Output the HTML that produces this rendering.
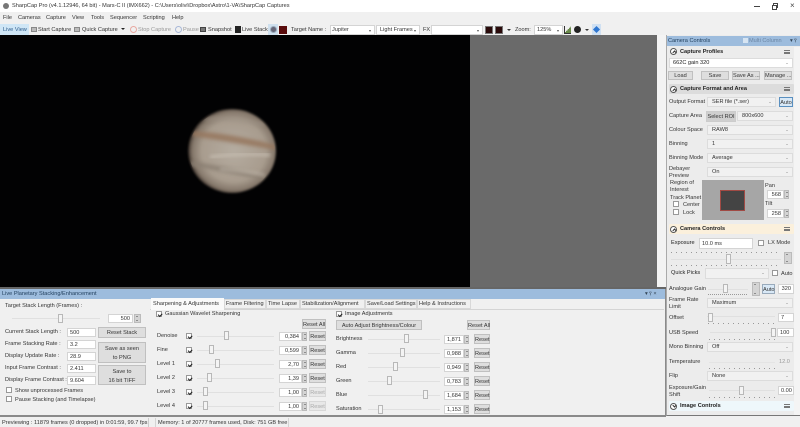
<!DOCTYPE html>
<html><head><meta charset="utf-8"><title>SharpCap Pro</title>
<style>
html,body{margin:0;padding:0}
body{width:800px;height:427px;overflow:hidden;position:relative;background:#f0f0f0;font:5.6px/8px "Liberation Sans",sans-serif;color:#333}
#r{position:absolute;left:0;top:0;width:800px;height:427px;overflow:hidden;filter:blur(.35px)}
#r div,#r span.s{position:absolute;box-sizing:border-box}
.t{white-space:nowrap;height:8px}
.g{color:#999}
.b{font-weight:bold;color:#222}
.i{background:#fff;border:.6px solid #d4d4d4;padding-right:2px;text-align:right;line-height:8px;white-space:nowrap}
.il{text-align:left;padding-left:2px}
.d{background:#f1f1f1;border:.6px solid #dcdcdc;padding-left:4px;line-height:9px;white-space:nowrap}
.d:after{content:"";position:absolute;right:4px;top:4px;border:1.4px solid transparent;border-top:1.8px solid #999;border-bottom:0}
.w{background:#fff;border:.6px solid #d4d4d4;padding-left:1px;line-height:9px;white-space:nowrap}
.w:after{content:"";position:absolute;right:3px;top:4px;border:1.6px solid transparent;border-top:2px solid #555;border-bottom:0}
.btn{background:#dedede;border:.6px solid #c0c0c0;text-align:center;white-space:nowrap;line-height:8px;color:#333}
.off{color:#aaa;background:#e8e8e8;border-color:#d8d8d8}
.c{background:#fff;border:.6px solid #999;width:6px;height:6px}
.ck:after{content:"";position:absolute;left:1px;top:.6px;width:3.4px;height:1.8px;border-left:.9px solid #222;border-bottom:.9px solid #222;transform:rotate(-45deg)}
.sl{height:1.2px;background:#e0e0e0}
.th{background:#f4f4f4;border:.6px solid #b8b8b8;width:5px;height:9px}
.sp{background:#d4d4d4;border:.6px solid #bbb;width:5px;height:9px}
.sp:before{content:"";position:absolute;left:.6px;top:1px;border:1.3px solid transparent;border-bottom:1.8px solid #444;border-top:0}
.sp:after{content:"";position:absolute;left:.6px;bottom:1px;border:1.3px solid transparent;border-top:1.8px solid #444;border-bottom:0}
.tk{height:1px;background:repeating-linear-gradient(90deg,#999 0 1px,transparent 1px 5px)}
.h{height:10px;border-radius:1px}
.o{width:7px;height:7px;border:.6px solid #555;border-radius:50%;background:#fff}
.o:after{content:"";position:absolute;left:1.7px;top:2.2px;width:2px;height:2px;border-left:.7px solid #333;border-top:.7px solid #333;transform:rotate(45deg)}
.dn:after{top:.9px;transform:rotate(225deg)}
.m{width:6px;height:4px;border-top:.7px solid #777;border-bottom:.7px solid #777}
.m:after{content:"";position:absolute;left:0;right:0;top:1px;height:.7px;background:#777}
</style></head><body><div id="r">

<!-- title -->
<div style="left:0;top:0;width:800px;height:12px;background:#fff"></div>
<div style="left:3px;top:3px;width:6px;height:6px;border-radius:50%;background:#777"></div>
<div class="t" style="left:12px;top:2px">SharpCap Pro (v4.1.12946, 64 bit) - Mars-C II (IMX662) - C:\Users\olivi\Dropbox\Astro\1-VA\SharpCap Captures</div>
<div style="left:754px;top:5.5px;width:6px;height:.7px;background:#444"></div>
<div style="left:773px;top:3px;width:5px;height:5px;border:.6px solid #444;background:#fff"></div>
<div style="left:771.5px;top:4.5px;width:5px;height:5px;border:.6px solid #444;background:#fff"></div>
<div class="t" style="left:790px;top:2px;font-size:8px;color:#444">×</div>

<!-- menu -->
<div class="t" style="left:3px;top:14px">File</div>
<div class="t" style="left:18px;top:14px">Cameras</div>
<div class="t" style="left:46px;top:14px">Capture</div>
<div class="t" style="left:72px;top:14px">View</div>
<div class="t" style="left:91px;top:14px">Tools</div>
<div class="t" style="left:110px;top:14px">Sequencer</div>
<div class="t" style="left:143px;top:14px">Scripting</div>
<div class="t" style="left:172px;top:14px">Help</div>

<!-- toolbar -->
<div style="left:0;top:24px;width:29px;height:11px;background:#cfe6f6"></div>
<div class="t" style="left:3px;top:26px;color:#2a5a8a">Live View</div>
<div style="left:31px;top:27px;width:6px;height:5px;background:#bbb;border:.6px solid #888"></div>
<div class="t" style="left:38px;top:26px">Start Capture</div>
<div style="left:74px;top:27px;width:6px;height:5px;background:#bbb;border:.6px solid #888"></div>
<div class="t" style="left:82px;top:26px">Quick Capture</div>
<div style="left:121px;top:28px;border:2px solid transparent;border-top:2.5px solid #222;border-bottom:0"></div>
<div style="left:130px;top:26px;width:7px;height:7px;border:.8px solid #e8a8a0;border-radius:50%"></div>
<div class="t g" style="left:138px;top:26px">Stop Capture</div>
<div style="left:175px;top:26px;width:7px;height:7px;border:.8px solid #a8b8d8;border-radius:50%"></div>
<div class="t g" style="left:183px;top:26px">Pause</div>
<div style="left:200px;top:27px;width:6px;height:5px;background:#777;border:.6px solid #444"></div>
<div class="t" style="left:208px;top:26px">Snapshot</div>
<div style="left:235px;top:26px;width:6px;height:7px;background:#222"></div>
<div class="t" style="left:242px;top:26px">Live Stack</div>
<div style="left:268px;top:24px;width:10px;height:11px;background:#cfe0ee"></div>
<div style="left:270px;top:26px;width:7px;height:7px;border-radius:50%;background:#667;border:1px solid #9ab"></div>
<div style="left:279px;top:26px;width:8px;height:8px;background:#5a0c0c"></div>
<div class="t" style="left:291px;top:26px">Target Name :</div>
<div class="w" style="left:330px;top:25px;width:45px;height:10px">Jupiter</div>
<div class="w" style="left:376px;top:25px;width:44px;height:10px;padding-left:3px">Light Frames</div>
<div class="t" style="left:423px;top:26px">FX</div>
<div class="w" style="left:431px;top:25px;width:52px;height:10px"></div>
<div style="left:485px;top:26px;width:8px;height:8px;background:#2a0a0a;border:.6px solid #777"></div>
<div style="left:495px;top:26px;width:8px;height:8px;background:#2a0a0a;border:.6px solid #777"></div>
<div style="left:507px;top:29px;border:2px solid transparent;border-top:2.5px solid #333;border-bottom:0"></div>
<div class="t" style="left:515px;top:26px">Zoom:</div>
<div class="w" style="left:534px;top:25px;width:29px;height:10px;padding-left:2px">125%</div>
<div style="left:564px;top:26px;width:7px;height:8px;background:linear-gradient(135deg,#f0f0f0 50%,#6a8a4a 50%);border-left:.8px solid #333;border-bottom:.8px solid #333"></div>
<div style="left:574px;top:26px;width:7px;height:7px;border-radius:50%;background:#222"></div>
<div style="left:585px;top:29px;border:2px solid transparent;border-top:2.5px solid #333;border-bottom:0"></div>
<div style="left:592px;top:24px;width:9px;height:11px;background:#cfe0f2"></div>
<div style="left:594px;top:27px;width:5px;height:5px;background:#2f76d0;transform:rotate(45deg)"></div>

<!-- image area -->
<div style="left:0;top:35px;width:470px;height:252px;background:#020203"></div>
<div style="left:470px;top:35px;width:187px;height:252px;background:#6a6a6a"></div>
<div style="left:657px;top:35px;width:9px;height:254px;background:#f3f3f3"></div>
<svg style="position:absolute;left:170px;top:95px" width="110" height="110" viewBox="0 0 110 110">
<defs>
<radialGradient id="p" cx=".52" cy=".5" r=".52"><stop offset="0" stop-color="#b5aca0"/><stop offset=".7" stop-color="#a89c8e"/><stop offset=".9" stop-color="#85786b"/><stop offset=".98" stop-color="#4a3f37"/><stop offset="1" stop-color="#1c1714"/></radialGradient>
<clipPath id="cp"><ellipse cx="62" cy="56" rx="43" ry="41"/></clipPath>
<filter id="f1" x="-20%" y="-50%" width="140%" height="200%"><feGaussianBlur stdDeviation="1.8"/></filter>
<filter id="f2"><feGaussianBlur stdDeviation="1"/></filter>
</defs>
<ellipse cx="62" cy="56" rx="44" ry="42" fill="url(#p)" filter="url(#f2)"/>
<g clip-path="url(#cp)">
<path d="M22 36 Q60 38 106 50 L106 55 Q60 47 22 41Z" fill="#96775f" opacity=".85" filter="url(#f1)"/>
<path d="M20 66 Q60 72 104 84 L104 87 Q60 78 20 71Z" fill="#8a7f72" opacity=".8" filter="url(#f1)"/>
<path d="M40 62 Q70 58 100 60" stroke="#c8bfb3" stroke-width="3" fill="none" opacity=".8" filter="url(#f1)"/>
<path d="M50 74 Q75 76 95 80" stroke="#c2b9ad" stroke-width="2.5" fill="none" opacity=".7" filter="url(#f1)"/>
<path d="M32 24 Q60 22 94 30" stroke="#9b9084" stroke-width="3" fill="none" opacity=".6" filter="url(#f1)"/>
</g>
</svg>
<div style="left:0;top:287px;width:666px;height:2px;background:#666"></div>

<!-- bottom panel -->
<div style="left:0;top:289px;width:666px;height:128px;background:#f0f0f0;border:.8px solid #8a8a8a;border-width:0 1px 2px 0"></div>
<div style="left:0;top:289px;width:665px;height:10px;background:#9dbcdd"></div>
<div class="t" style="left:2px;top:290px;color:#23415f">Live Planetary Stacking/Enhancement</div>
<div class="t" style="left:645px;top:290px;color:#345">▾ ⫯ ×</div>

<div class="t" style="left:5px;top:302px">Target Stack Length (Frames) :</div>
<div class="sl" style="left:12px;top:318px;width:88px"></div>
<div class="th" style="left:58px;top:314px"></div>
<div class="i" style="left:108px;top:314px;width:25px;height:9px">500</div>
<div class="sp" style="left:134px;top:314px;width:7px"></div>

<div class="t" style="left:5px;top:328px">Current Stack Length :</div>
<div class="i il" style="left:67px;top:328px;width:29px;height:9px">500</div>
<div class="t" style="left:5px;top:340px">Frame Stacking Rate :</div>
<div class="i il" style="left:67px;top:340px;width:29px;height:9px">3.2</div>
<div class="t" style="left:5px;top:352px">Display Update Rate :</div>
<div class="i il" style="left:67px;top:352px;width:29px;height:9px">28.9</div>
<div class="t" style="left:5px;top:364px">Input Frame Contrast :</div>
<div class="i il" style="left:67px;top:364px;width:29px;height:9px">2.411</div>
<div class="t" style="left:5px;top:376px">Display Frame Contrast :</div>
<div class="i il" style="left:67px;top:376px;width:29px;height:9px">9.604</div>
<div class="btn" style="left:98px;top:327px;width:48px;height:11px;line-height:11px">Reset Stack</div>
<div class="btn" style="left:98px;top:342px;width:48px;height:21px;line-height:9px;padding-top:1.5px">Save as seen<br>to PNG</div>
<div class="btn" style="left:98px;top:365px;width:48px;height:20px;line-height:9px;padding-top:1.5px">Save to<br>16 bit TIFF</div>
<div class="c" style="left:6px;top:387px"></div>
<div class="t" style="left:15px;top:387px">Show unprocessed Frames</div>
<div class="c" style="left:6px;top:396px"></div>
<div class="t" style="left:15px;top:396px">Pause Stacking (and Timelapse)</div>

<!-- tabs -->
<div style="left:150px;top:309px;width:514px;height:.6px;background:#d4d4d4"></div>
<div style="left:151px;top:298px;width:73px;height:12px;background:#fafafa"></div>
<div class="t" style="left:153px;top:300px">Sharpening &amp; Adjustments</div>
<div style="left:224px;top:299px;width:42px;height:10px;border:.6px solid #d8d8d8"></div><div class="t" style="left:226px;top:300px">Frame Filtering</div>
<div style="left:266px;top:299px;width:34px;height:10px;border:.6px solid #d8d8d8"></div><div class="t" style="left:268px;top:300px">Time Lapse</div>
<div style="left:300px;top:299px;width:65px;height:10px;border:.6px solid #d8d8d8"></div><div class="t" style="left:302px;top:300px">Stabilization/Alignment</div>
<div style="left:365px;top:299px;width:52px;height:10px;border:.6px solid #d8d8d8"></div><div class="t" style="left:367px;top:300px">Save/Load Settings</div>
<div style="left:417px;top:299px;width:54px;height:10px;border:.6px solid #d8d8d8"></div><div class="t" style="left:419px;top:300px">Help &amp; Instructions</div>

<!-- sharpening column -->
<div class="c ck" style="left:156px;top:311px"></div>
<div class="t" style="left:165px;top:310px">Gaussian Wavelet Sharpening</div>
<div class="btn" style="left:302px;top:319px;width:24px;height:10px;line-height:10px">Reset All</div>

<div class="t" style="left:157px;top:332px">Denoise</div><div class="c ck" style="left:186px;top:333px"></div><div class="sl" style="left:197px;top:336px;width:77px"></div><div class="th" style="left:224px;top:331px"></div><div class="i" style="left:279px;top:332px;width:23px;height:9px">0,384</div><div class="sp" style="left:302px;top:332px"></div><div class="btn" style="left:309px;top:331px;width:17px;height:10px;line-height:10px">Reset</div>
<div class="t" style="left:157px;top:346px">Fine</div><div class="c ck" style="left:186px;top:347px"></div><div class="sl" style="left:197px;top:350px;width:77px"></div><div class="th" style="left:209px;top:345px"></div><div class="i" style="left:279px;top:346px;width:23px;height:9px">0,599</div><div class="sp" style="left:302px;top:346px"></div><div class="btn" style="left:309px;top:345px;width:17px;height:10px;line-height:10px">Reset</div>
<div class="t" style="left:157px;top:360px">Level 1</div><div class="c ck" style="left:186px;top:361px"></div><div class="sl" style="left:197px;top:364px;width:77px"></div><div class="th" style="left:215px;top:359px"></div><div class="i" style="left:279px;top:360px;width:23px;height:9px">2,70</div><div class="sp" style="left:302px;top:360px"></div><div class="btn" style="left:309px;top:359px;width:17px;height:10px;line-height:10px">Reset</div>
<div class="t" style="left:157px;top:374px">Level 2</div><div class="c ck" style="left:186px;top:375px"></div><div class="sl" style="left:197px;top:378px;width:77px"></div><div class="th" style="left:207px;top:373px"></div><div class="i" style="left:279px;top:374px;width:23px;height:9px">1,39</div><div class="sp" style="left:302px;top:374px"></div><div class="btn" style="left:309px;top:373px;width:17px;height:10px;line-height:10px">Reset</div>
<div class="t" style="left:157px;top:388px">Level 3</div><div class="c ck" style="left:186px;top:389px"></div><div class="sl" style="left:197px;top:392px;width:77px"></div><div class="th" style="left:203px;top:387px"></div><div class="i" style="left:279px;top:388px;width:23px;height:9px">1,00</div><div class="sp" style="left:302px;top:388px"></div><div class="btn off" style="left:309px;top:387px;width:17px;height:10px;line-height:10px">Reset</div>
<div class="t" style="left:157px;top:402px">Level 4</div><div class="c ck" style="left:186px;top:403px"></div><div class="sl" style="left:197px;top:406px;width:77px"></div><div class="th" style="left:203px;top:401px"></div><div class="i" style="left:279px;top:402px;width:23px;height:9px">1,00</div><div class="sp" style="left:302px;top:402px"></div><div class="btn off" style="left:309px;top:401px;width:17px;height:10px;line-height:10px">Reset</div>

<!-- image adjustments -->
<div class="c ck" style="left:336px;top:311px"></div>
<div class="t" style="left:345px;top:310px">Image Adjustments</div>
<div class="btn" style="left:336px;top:320px;width:86px;height:10px;line-height:10px">Auto Adjust Brightness/Colour</div>
<div class="btn" style="left:467px;top:320px;width:23px;height:10px;line-height:10px">Reset All</div>

<div class="t" style="left:336px;top:335px">Brightness</div><div class="sl" style="left:368px;top:339px;width:72px"></div><div class="th" style="left:404px;top:334px"></div><div class="i" style="left:444px;top:335px;width:20px;height:9px">1,871</div><div class="sp" style="left:464px;top:335px"></div><div class="btn" style="left:474px;top:334px;width:16px;height:10px;line-height:10px">Reset</div>
<div class="t" style="left:336px;top:349px">Gamma</div><div class="sl" style="left:368px;top:353px;width:72px"></div><div class="th" style="left:400px;top:348px"></div><div class="i" style="left:444px;top:349px;width:20px;height:9px">0,988</div><div class="sp" style="left:464px;top:349px"></div><div class="btn" style="left:474px;top:348px;width:16px;height:10px;line-height:10px">Reset</div>
<div class="t" style="left:336px;top:363px">Red</div><div class="sl" style="left:368px;top:367px;width:72px"></div><div class="th" style="left:393px;top:362px"></div><div class="i" style="left:444px;top:363px;width:20px;height:9px">0,949</div><div class="sp" style="left:464px;top:363px"></div><div class="btn" style="left:474px;top:362px;width:16px;height:10px;line-height:10px">Reset</div>
<div class="t" style="left:336px;top:377px">Green</div><div class="sl" style="left:368px;top:381px;width:72px"></div><div class="th" style="left:387px;top:376px"></div><div class="i" style="left:444px;top:377px;width:20px;height:9px">0,783</div><div class="sp" style="left:464px;top:377px"></div><div class="btn" style="left:474px;top:376px;width:16px;height:10px;line-height:10px">Reset</div>
<div class="t" style="left:336px;top:391px">Blue</div><div class="sl" style="left:368px;top:395px;width:72px"></div><div class="th" style="left:423px;top:390px"></div><div class="i" style="left:444px;top:391px;width:20px;height:9px">1,684</div><div class="sp" style="left:464px;top:391px"></div><div class="btn" style="left:474px;top:390px;width:16px;height:10px;line-height:10px">Reset</div>
<div class="t" style="left:336px;top:405px">Saturation</div><div class="sl" style="left:368px;top:409px;width:72px"></div><div class="th" style="left:378px;top:405px"></div><div class="i" style="left:444px;top:405px;width:20px;height:9px">1,153</div><div class="sp" style="left:464px;top:405px"></div><div class="btn" style="left:474px;top:404px;width:16px;height:10px;line-height:10px">Reset</div>

<!-- status -->
<div style="left:1px;top:418px;width:148px;height:9px;border-right:.6px solid #ccc"></div>
<div class="t" style="left:2px;top:419px">Previewing : 11879 frames (0 dropped) in 0:01:59, 99.7 fps</div>
<div style="left:155px;top:418px;width:134px;height:9px;border:.6px solid #d4d4d4;border-width:0 .6px"></div>
<div class="t" style="left:158px;top:419px">Memory: 1 of 20777 frames used, Disk: 751 GB free</div>

<!-- right panel -->
<div style="left:666px;top:35px;width:134px;height:381px;background:#ececec;border-left:1px solid #aaa;border-bottom:1px solid #777"></div>
<div style="left:667px;top:36px;width:133px;height:10px;background:#9dbcdd"></div>
<div class="t" style="left:668px;top:37px;color:#23415f">Camera Controls</div>
<div style="left:743px;top:38px;width:5px;height:5px;background:#d6e4f2"></div>
<div class="t" style="left:749px;top:37px;color:#6c86a4">Multi Column</div>
<div class="t" style="left:790px;top:37px;color:#345">▾ ⫯</div>
<div style="left:794px;top:47px;width:6px;height:368px;background:#f4f4f4"></div>

<div class="o" style="left:670px;top:48px"></div>
<div class="t b" style="left:680px;top:48px">Capture Profiles</div>
<div class="m" style="left:784px;top:50px"></div>
<div class="d" style="left:669px;top:58px;width:124px;height:10px;padding-left:3px;background:#fff;color:#222">662C gain 320</div>
<div class="btn" style="left:668px;top:71px;width:25px;height:9px">Load</div>
<div class="btn" style="left:701px;top:71px;width:28px;height:9px">Save</div>
<div class="btn" style="left:732px;top:71px;width:28px;height:9px">Save As ...</div>
<div class="btn" style="left:764px;top:71px;width:28px;height:9px">Manage ...</div>

<div class="h" style="left:669px;top:84px;width:125px;background:#dcdcdc"></div>
<div class="o" style="left:670px;top:85.5px"></div>
<div class="t b" style="left:680px;top:85px">Capture Format and Area</div>
<div class="m" style="left:784px;top:87px"></div>

<div class="t" style="left:669px;top:98px">Output Format</div>
<div class="d" style="left:707px;top:97px;width:69px;height:10px">SER file (*.ser)</div>
<div class="btn" style="left:779px;top:97px;width:14px;height:10px;line-height:10px;background:#d8e8f6;border-color:#5a90c0">Auto</div>
<div class="t" style="left:669px;top:112px">Capture Area</div>
<div class="btn" style="left:706px;top:111px;width:30px;height:11px;line-height:11px;background:#cfcfcf;border-color:#ccc">Select ROI</div>
<div class="d" style="left:737px;top:111px;width:56px;height:10px">800x600</div>
<div class="t" style="left:669px;top:126px">Colour Space</div>
<div class="d" style="left:707px;top:125px;width:86px;height:10px">RAW8</div>
<div class="t" style="left:669px;top:140px">Binning</div>
<div class="d" style="left:707px;top:139px;width:86px;height:10px">1</div>
<div class="t" style="left:669px;top:154px">Binning Mode</div>
<div class="d" style="left:707px;top:153px;width:86px;height:10px">Average</div>
<div class="t" style="left:669px;top:165px">Debayer</div>
<div class="t" style="left:669px;top:172px">Preview</div>
<div class="d" style="left:707px;top:167px;width:86px;height:10px">On</div>

<div class="t" style="left:670px;top:179px">Region of</div>
<div class="t" style="left:670px;top:186px">Interest</div>
<div class="t" style="left:670px;top:194px">Track Planet</div>
<div class="c" style="left:673px;top:201px"></div>
<div class="t" style="left:683px;top:201px">Center</div>
<div class="c" style="left:673px;top:209px"></div>
<div class="t" style="left:683px;top:209px">Lock</div>
<div style="left:702px;top:180px;width:62px;height:40px;background:#a6a6a6"></div>
<div style="left:720px;top:190px;width:25px;height:21px;background:#444;border:.8px solid #a04a44"></div>
<div class="t" style="left:765px;top:182px">Pan</div>
<div class="i" style="left:767px;top:190px;width:17px;height:9px">568</div>
<div class="sp" style="left:784px;top:190px"></div>
<div class="t" style="left:765px;top:200px">Tilt</div>
<div class="i" style="left:767px;top:209px;width:17px;height:9px">258</div>
<div class="sp" style="left:784px;top:209px"></div>

<div class="h" style="left:669px;top:224px;width:125px;background:#fbf0dc"></div>
<div class="o" style="left:670px;top:225.5px"></div>
<div class="t b" style="left:680px;top:225px">Camera Controls</div>
<div class="m" style="left:784px;top:227px"></div>

<div class="t" style="left:671px;top:239px;color:#222">Exposure</div>
<div class="i il" style="left:699px;top:238px;width:54px;height:11px;line-height:10px">10.0 ms</div>
<div class="c" style="left:758px;top:240px"></div>
<div class="t" style="left:768px;top:239px">LX Mode</div>
<div class="tk" style="left:671px;top:252px;width:110px"></div>
<div class="sl" style="left:671px;top:259px;width:110px"></div>
<div class="th" style="left:726px;top:254px;height:10px"></div>
<div class="tk" style="left:671px;top:265px;width:110px"></div>
<div class="sp" style="left:784px;top:252px;width:8px;height:12px"></div>
<div class="t" style="left:671px;top:269px;color:#222">Quick Picks</div>
<div class="d" style="left:705px;top:268px;width:64px;height:11px"></div>
<div class="c" style="left:772px;top:270px"></div>
<div class="t" style="left:781px;top:270px">Auto</div>

<div class="t" style="left:669px;top:285px">Analogue Gain</div>
<div class="sl" style="left:708px;top:289px;width:40px"></div>
<div class="th" style="left:723px;top:284px;width:5px"></div>
<div class="tk" style="left:708px;top:294px;width:40px;background:repeating-linear-gradient(90deg,#999 0 1px,transparent 1px 2px)"></div>
<div class="sp" style="left:752px;top:282px;width:8px;height:14px"></div>
<div class="btn" style="left:762px;top:284px;width:13px;height:10px;line-height:10px;background:#d8e8f6;border-color:#9ab">Auto</div>
<div class="i" style="left:778px;top:284px;width:16px;height:10px;line-height:9px">320</div>
<div class="t" style="left:669px;top:296px">Frame Rate</div>
<div class="t" style="left:669px;top:303px">Limit</div>
<div class="d" style="left:707px;top:298px;width:86px;height:10px">Maximum</div>
<div class="t" style="left:669px;top:314px">Offset</div>
<div class="sl" style="left:707px;top:316px;width:68px"></div>
<div class="th" style="left:708px;top:313px"></div>
<div class="i il" style="left:778px;top:313px;width:16px;height:9px">7</div>
<div class="tk" style="left:708px;top:323px;width:66px"></div>

<div class="t" style="left:669px;top:329px">USB Speed</div>
<div class="sl" style="left:710px;top:332px;width:65px"></div>
<div class="th" style="left:771px;top:328px"></div>
<div class="i il" style="left:777px;top:328px;width:17px;height:9px">100</div>
<div class="tk" style="left:709px;top:339px;width:66px"></div>
<div class="t" style="left:669px;top:343px">Mono Binning</div>
<div class="d" style="left:707px;top:342px;width:86px;height:10px">Off</div>
<div class="t" style="left:669px;top:358px">Temperature</div>
<div class="sl" style="left:709px;top:362px;width:66px;background:#e4e4e4"></div>
<div class="t g" style="left:779px;top:358px">12.0</div>
<div class="tk" style="left:709px;top:368px;width:66px"></div>
<div class="t" style="left:669px;top:372px">Flip</div>
<div class="d" style="left:707px;top:371px;width:86px;height:10px">None</div>
<div class="t" style="left:669px;top:384px">Exposure/Gain</div>
<div class="t" style="left:669px;top:391px">Shift</div>
<div class="sl" style="left:709px;top:390px;width:66px"></div>
<div class="th" style="left:739px;top:386px"></div>
<div class="i il" style="left:778px;top:386px;width:16px;height:9px">0.00</div>
<div class="tk" style="left:709px;top:397px;width:66px"></div>
<div class="h" style="left:669px;top:401px;width:125px;background:#eef7fb"></div>
<div class="o dn" style="left:670px;top:402.5px"></div>
<div class="t b" style="left:680px;top:402px">Image Controls</div>
<div class="m" style="left:784px;top:404px"></div>

</div></body></html>
